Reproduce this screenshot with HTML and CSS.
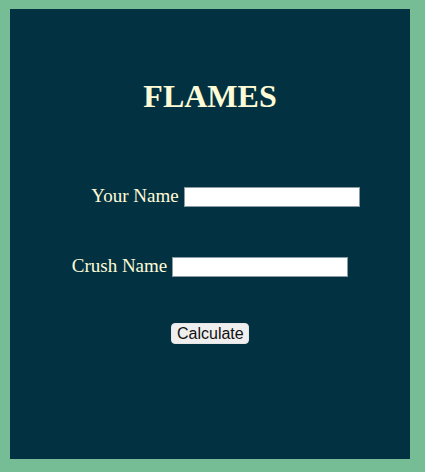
FILE: index.html
```html
<!DOCTYPE html>
<html>
<head>
<meta charset="utf-8">
<title>FLAMES</title>
<link rel="stylesheet" href="styles.css">
</head>
<body>
<div class="card">
  <h1 class="title">FLAMES</h1>
  <div class="row row-first">
    <label class="label" for="you">Your Name</label>
    <input class="field" id="you" type="text">
  </div>
  <div class="row row-second">
    <label class="label" for="crush">Crush Name</label>
    <input class="field" id="crush" type="text">
  </div>
  <button class="btn" type="button">Calculate</button>
</div>
</body>
</html>
```
FILE: styles.css
```css
html, body {
  margin: 0;
  padding: 0;
}
body {
  background: #76bd96;
  padding: 9px 15px 13px 10px;
  height: 472px;
  box-sizing: border-box;
}
.card {
  width: 400px;
  height: 450px;
  background: #023142;
  box-sizing: border-box;
  padding-top: 69px;
  display: flex;
  flex-direction: column;
  align-items: center;
  font-family: "Liberation Serif", "Times New Roman", serif;
  color: #fffbd6;
}
.title {
  margin: 0;
  font-size: 32px;
  line-height: 36px;
  font-weight: bold;
}
.row {
  display: flex;
  align-items: center;
  height: 21px;
}
.row-first {
  margin-top: 72px;
  padding-left: 31px;
}
.row-second {
  margin-top: 49px;
}
.label {
  font-size: 19px;
  line-height: 21px;
  margin-right: 5px;
  position: relative;
  top: -1px;
}
.field {
  width: 176px;
  height: 20px;
  box-sizing: border-box;
  margin: 0;
  border: 1px solid #8a9ba3;
  background: #fff;
  padding: 1px 2px;
  font-size: 13px;
}
.btn {
  margin-top: 46px;
  width: 78px;
  height: 21px;
  box-sizing: border-box;
  padding: 0 5px;
  font-family: "Liberation Sans", Arial, sans-serif;
  font-size: 16px;
  line-height: 19px;
  color: #111;
  background: #efefef;
  border: 1px solid #e6e6e6;
  border-radius: 4px;
}
```
